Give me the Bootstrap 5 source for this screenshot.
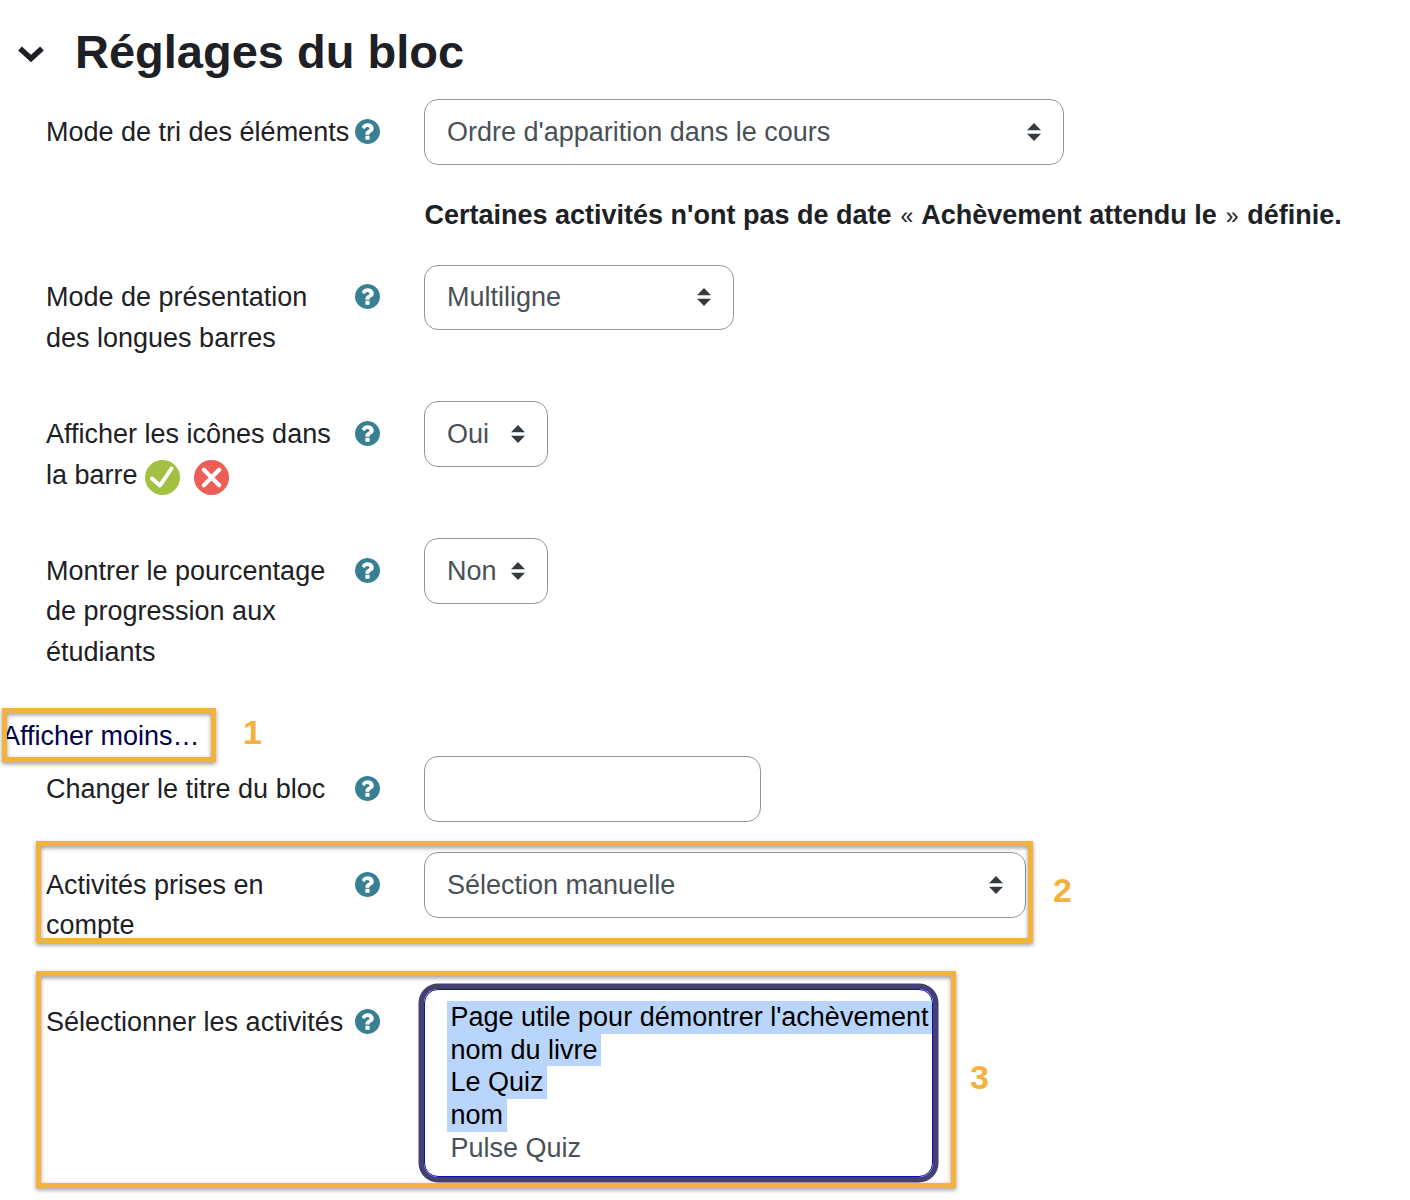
<!DOCTYPE html>
<html lang="fr">
<head>
<meta charset="utf-8">
<meta name="viewport" content="width=device-width, initial-scale=1">
<title>Réglages du bloc</title>
<link rel="stylesheet" href="https://cdn.jsdelivr.net/npm/bootstrap@5.3.0/dist/css/bootstrap.min.css">
<style>
body{font-family:"Liberation Sans",Arial,sans-serif;font-size:27px;line-height:40.4px;color:#1d2125;background:#fff;overflow:hidden}
.settings{width:1410px;height:1200px;overflow:hidden}
.heading{height:99px;padding:22px 0 0 17px}
.heading h1{font-size:47px;line-height:60px;margin-left:30px}
.chevron{width:28px;height:18px}
.field{padding-left:46px}
.f-sort{height:98px}.f-note{height:68px}.f-long{height:136px}.f-icons{height:137px}.f-pct{height:177px}
.f-title{height:96px}.f-act{height:137px}
.caption-col{width:378px;padding:13px 44px 0 0}
.f-long .caption-col{padding-top:12px}
.f-long .caption-text,.f-icons .caption-text{line-height:41px}
.caption-text{width:309px;white-space:nowrap}
.help{width:25px;height:25px;margin-top:7px;fill:#387f93}
.control{height:66px;border:1px solid #8f959e;border-radius:14px;padding:0 22px;color:#495057;background:#fff}
.f-long .control{height:65px}
.w-sort{width:640px}.w-long{width:310px}.w-short{width:124px}.w-title{width:337px}.w-act{width:602px}
.carets{width:14px;height:18px;fill:#343a40}
.f-long .carets{margin-bottom:1px}
.note{margin-top:-2px;padding-left:.5px;white-space:nowrap}
.guil{font-size:23px;line-height:1;margin:0 1.4px}
.state{width:35px;height:35px;margin:3px 0 0 7px}
.state + .state{margin-left:14px}
.less{height:41px;color:#00004b;padding:1px 0 0 2px;text-decoration:none}
.choices{width:509px;height:188px;border:1px solid #0f0bc0;border-radius:14px;box-shadow:0 0 0 5.500px #444071;padding:11px 0 0 22px;color:#495057;line-height:32.700px;overflow:hidden}
.choices li{width:max-content;padding:0 3.500px;white-space:nowrap}
.choices .chosen{background:#b9d5fb;color:#000}
.callout{border:5px solid #f3b13e;filter:drop-shadow(0 2px 2px rgba(0,0,0,.4))}
.c1{left:2px;top:708px;width:214px;height:54px}
.c2{left:36px;top:841px;width:997px;height:102px}
.c3{left:36px;top:971px;width:920px;height:217px}
.num{color:#f3b13e;font-size:34px}
.n1{left:243px;top:712px}.n2{left:1053px;top:870px}.n3{left:970px;top:1057px}
</style>
<script src="https://cdn.jsdelivr.net/npm/bootstrap@5.3.0/dist/js/bootstrap.bundle.min.js"></script>
</head>
<body>
<svg class="d-none" xmlns="http://www.w3.org/2000/svg">
<symbol id="q" viewBox="128 128 1536 1536"><path d="M1024 1376v-192q0-14-9-23t-23-9h-192q-14 0-23 9t-9 23v192q0 14 9 23t23 9h192q14 0 23-9t9-23zm256-672q0-88-55.5-163t-138.500-116-170-41q-243 0-371 213-15 24 8 42l132 100q7 6 19 6 16 0 25-12 53-68 86-92 34-24 86-24 48 0 85.500 26t37.500 59q0 38-20 61t-68 45q-63 28-115.500 86.500t-52.500 125.500v36q0 14 9 23t23 9h192q14 0 23-9t9-23q0-19 21.500-49.500t54.500-49.500q32-18 49-28.500t46-35 44.500-48 28-60.500 12.500-81zm384 192q0 209-103 385.500t-279.500 279.500-385.500 103-385.500-103-279.500-279.500-103-385.500 103-385.500 279.500-279.500 385.500-103 385.500 103 279.500 279.500 103 385.500z"/></symbol>
<symbol id="ud" viewBox="0 0 14 18"><path d="M0 7.300 7 0l7 7.300zM0 10.700h14L7 18z"/></symbol>
</svg>
<main class="settings position-relative">
  <header class="heading d-flex align-items-start">
    <svg class="chevron align-self-start mt-4" viewBox="0 0 28 18"><path d="M3 2.500 14 12.500 25 2.500" fill="none" stroke="#1d2125" stroke-width="5.500" stroke-linejoin="miter"/></svg>
    <h1 class="fw-bold mb-0">Réglages du bloc</h1>
  </header>

  <div class="field f-sort d-flex align-items-start">
    <div class="caption-col d-flex flex-shrink-0"><span class="caption-text">Mode de tri des éléments</span><svg class="help flex-shrink-0"><use href="#q"/></svg></div>
    <div class="control w-sort d-flex align-items-center justify-content-between">Ordre d'apparition dans le cours<svg class="carets"><use href="#ud"/></svg></div>
  </div>
  <div class="field f-note d-flex align-items-start">
    <div class="caption-col flex-shrink-0"></div>
    <div class="note fw-bold">Certaines activités n'ont pas de date <span class="guil fw-normal">«</span> Achèvement attendu le <span class="guil fw-normal">»</span> définie.</div>
  </div>
  <div class="field f-long d-flex align-items-start">
    <div class="caption-col d-flex flex-shrink-0"><span class="caption-text">Mode de présentation<br>des longues barres</span><svg class="help flex-shrink-0"><use href="#q"/></svg></div>
    <div class="control w-long d-flex align-items-center justify-content-between">Multiligne<svg class="carets"><use href="#ud"/></svg></div>
  </div>
  <div class="field f-icons d-flex align-items-start">
    <div class="caption-col d-flex flex-shrink-0"><span class="caption-text">Afficher les icônes dans<br><span class="d-flex align-items-center">la barre
      <svg class="state" viewBox="0 0 35 35"><circle cx="17.500" cy="17.500" r="17.500" fill="#a2c143"/><path d="M7 18.500 15 25.500 26.500 8.500" fill="none" stroke="#fff" stroke-width="4" stroke-linecap="round" stroke-linejoin="round"/></svg>
      <svg class="state" viewBox="0 0 35 35"><circle cx="17.500" cy="17.500" r="17.500" fill="#ed5f56"/><path d="M9.800 9.800 25.200 25.200M25.200 9.800 9.800 25.200" stroke="#fff" stroke-width="4.200" stroke-linecap="round"/></svg></span></span><svg class="help flex-shrink-0"><use href="#q"/></svg></div>
    <div class="control w-short d-flex align-items-center justify-content-between">Oui<svg class="carets"><use href="#ud"/></svg></div>
  </div>
  <div class="field f-pct d-flex align-items-start">
    <div class="caption-col d-flex flex-shrink-0"><span class="caption-text">Montrer le pourcentage<br>de progression aux<br>étudiants</span><svg class="help flex-shrink-0"><use href="#q"/></svg></div>
    <div class="control w-short d-flex align-items-center justify-content-between">Non<svg class="carets"><use href="#ud"/></svg></div>
  </div>
  <a href="#" class="less d-block">Afficher moins…</a>
  <div class="field f-title d-flex align-items-start">
    <div class="caption-col d-flex flex-shrink-0"><span class="caption-text">Changer le titre du bloc</span><svg class="help flex-shrink-0"><use href="#q"/></svg></div>
    <input class="control w-title" type="text" aria-label="Changer le titre du bloc">
  </div>
  <div class="field f-act d-flex align-items-start">
    <div class="caption-col d-flex flex-shrink-0"><span class="caption-text">Activités prises en<br>compte</span><svg class="help flex-shrink-0"><use href="#q"/></svg></div>
    <div class="control w-act d-flex align-items-center justify-content-between">Sélection manuelle<svg class="carets"><use href="#ud"/></svg></div>
  </div>
  <div class="field d-flex align-items-start">
    <div class="caption-col d-flex flex-shrink-0"><span class="caption-text">Sélectionner les activités</span><svg class="help flex-shrink-0"><use href="#q"/></svg></div>
    <ul class="choices list-unstyled mb-0">
      <li class="chosen">Page utile pour démontrer l'achèvement</li>
      <li class="chosen">nom du livre</li>
      <li class="chosen">Le Quiz</li>
      <li class="chosen">nom</li>
      <li>Pulse Quiz</li>
    </ul>
  </div>

  <div class="callout c1 position-absolute"></div>
  <div class="callout c2 position-absolute"></div>
  <div class="callout c3 position-absolute"></div>
  <span class="num n1 position-absolute fw-bold">1</span>
  <span class="num n2 position-absolute fw-bold">2</span>
  <span class="num n3 position-absolute fw-bold">3</span>
</main>
</body>
</html>
